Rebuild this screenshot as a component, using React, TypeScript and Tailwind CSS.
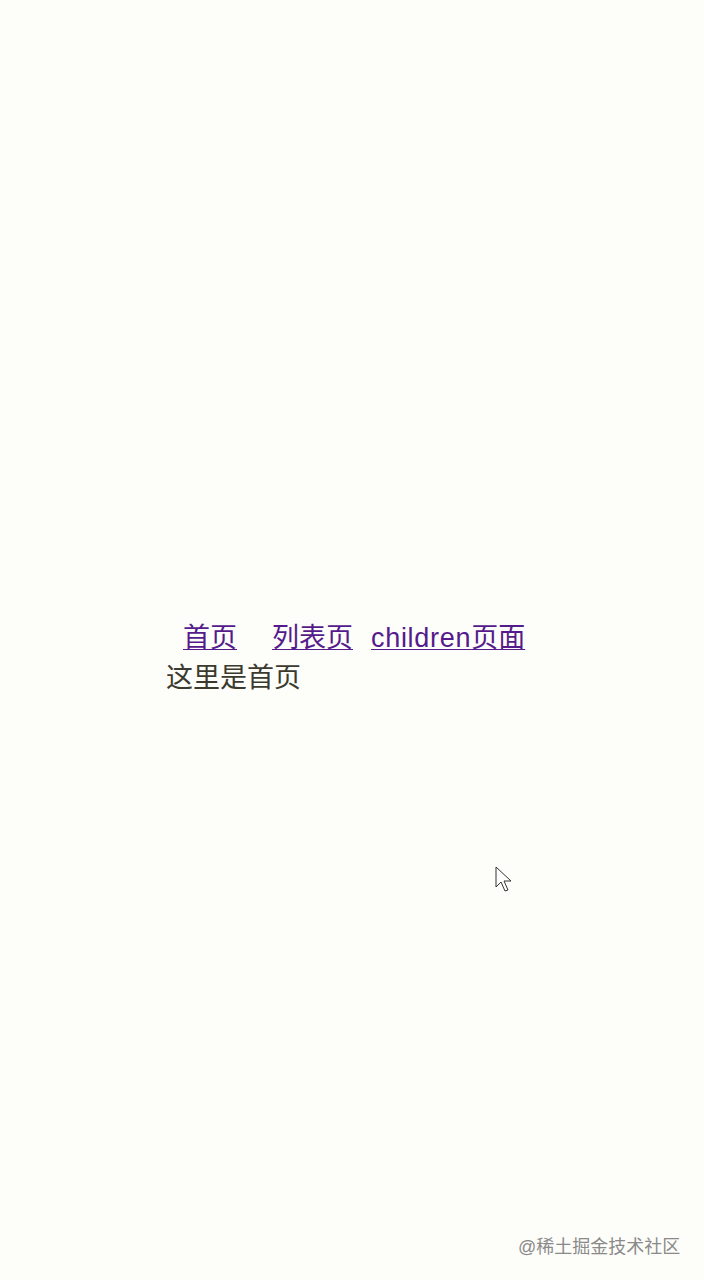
import React from "react";

export default function App() {
  const font = { fontFamily: '"Liberation Sans", "Noto Sans CJK SC", sans-serif' };
  return (
    <div
      className="relative w-[704px] h-[1280px] overflow-hidden bg-[#fdfdf9]"
      style={font}
    >
      <div className="pt-[618px] pl-[166px]">
        <div className="flex text-[27px] leading-[40px]">
          <a href="#" className="ml-[17px] text-[#551a8b] underline decoration-1 underline-offset-2">首页</a>
          <a href="#" className="ml-[35px] text-[#551a8b] underline decoration-1 underline-offset-2">列表页</a>
          <a href="#" className="ml-[18px] text-[#551a8b] underline decoration-1 underline-offset-2">
            <span className="tracking-[0.7px]">children</span>页面
          </a>
        </div>
        <div className="text-[27px] leading-[40px] text-[#3a3a2e]">这里是首页</div>
      </div>

      <svg
        className="absolute left-[495px] top-[866px]"
        width="18"
        height="28"
        viewBox="0 0 18 28"
      >
        <path
          d="M1 1 L1 21 L6 16 L10 25 L13 24 L9 15 L16 15 Z"
          fill="#ffffff"
          stroke="#333333"
          strokeWidth="1"
          strokeLinejoin="round"
        />
      </svg>

      <div className="absolute left-[518px] top-[1235px] text-[18px] leading-[24px] text-[#8a8a8a]">
        @稀土掘金技术社区
      </div>
    </div>
  );
}
